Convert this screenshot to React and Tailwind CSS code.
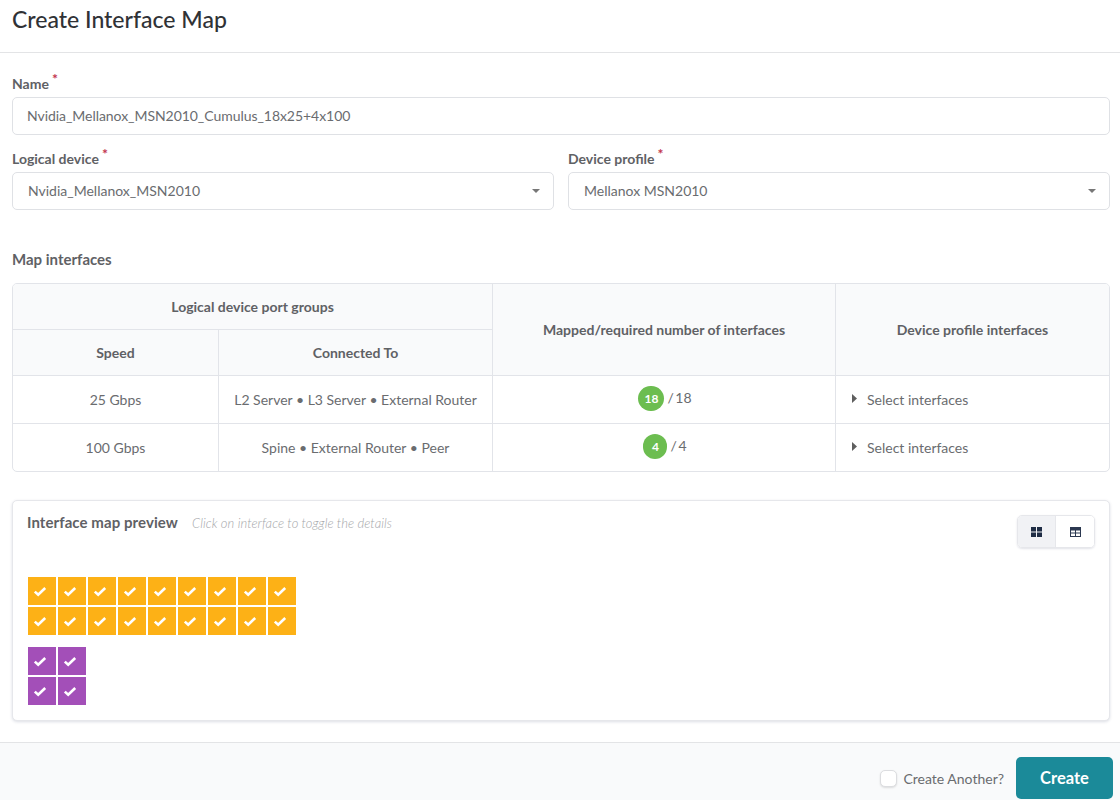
import React from "react";

const Star = () => <span className="relative top-[-4px] ml-[3px] text-[14px] leading-none text-[#c2334d]">*</span>;

const Caret = () => (
  <svg width="8" height="4" viewBox="0 0 8 4" className="shrink-0"><path d="M0 0h8L4 4z" fill="#777" /></svg>
);

const Tri = () => (
  <svg width="5" height="9" viewBox="0 0 5 9" className="shrink-0 relative top-[-1px]"><path d="M0 0l5 4.5L0 9z" fill="#5f5f5f" /></svg>
);

const Check = () => (
  <svg width="14" height="11" viewBox="0 0 14 11" fill="none"><path d="M1.8 5.6l3.4 3.2 7-6.8" stroke="#fff" strokeWidth="2.6" /></svg>
);

const Port = ({ color }) => (
  <div className={`w-7 h-7 pr-1 flex items-center justify-center ${color}`}><Check /></div>
);

const Select = ({ label, value }) => (
  <div className="flex-1 min-w-0">
    <div className="h-[22px] flex items-center text-[14px] font-bold text-[#5f6165]">{label}<Star /></div>
    <div className="mt-[3px] h-[38px] rounded-[5px] border border-[#dfe1e5] bg-white flex items-center justify-between pl-[15px] pr-[13px] pb-[1px] text-[14px] text-[#6a6c6f]">
      {value}<Caret />
    </div>
  </div>
);

const th = "bg-[#f9fafb] font-bold text-[14px] text-[#5f6165] text-center border-[#e2e4e9]";
const td = "text-[14px] text-[#6a6c6f] text-center border-[#e2e4e9]";

const Count = ({ n, w }) => (
  <div className="flex items-center justify-center gap-[3px] pl-[2px] relative top-[-1px]">
    <span className={`h-[25px] ${w} rounded-full bg-[#6cbd50] text-white text-[12px] font-bold flex items-center justify-center`}>{n}</span>
    <span className="relative top-[-1px] [word-spacing:-2px]">/ {n}</span>
  </div>
);

const Select2 = () => (
  <div className="flex items-center gap-[10px] pl-[16px]"><Tri /><span>Select interfaces</span></div>
);

export default function App() {
  return (
    <div className="h-[800px] w-[1120px] overflow-hidden flex flex-col bg-white font-['Lato','Noto_Sans',sans-serif]">
      <header className="h-[53px] shrink-0 border-b border-[#e3e4e6] pl-3 pb-[13px] flex items-center">
        <h1 className="text-[23px] font-medium leading-none text-[#303236]">Create Interface Map</h1>
      </header>

      <main className="flex-1 min-h-0 pl-3 pr-[10px] pt-[19px]">
        <div className="h-[22px] flex items-center text-[14px] font-bold text-[#5f6165]">Name<Star /></div>
        <div className="mt-[3px] h-[38px] rounded-[5px] border border-[#dfe1e5] bg-white flex items-center px-[14px] pb-[1px] text-[14px] tracking-[-0.05px] text-[#6a6c6f]">
          Nvidia_Mellanox_MSN2010_Cumulus_18x25+4x100
        </div>

        <div className="mt-[12px] flex gap-[14px]">
          <Select label="Logical device" value="Nvidia_Mellanox_MSN2010" />
          <Select label="Device profile" value="Mellanox MSN2010" />
        </div>

        <div className="mt-[38px] h-[22px] flex items-center text-[15px] font-bold text-[#5f6165]">Map interfaces</div>

        <table className="mt-[13px] w-full table-fixed border-separate border-spacing-0 rounded-[5px] border border-[#e2e4e9] overflow-hidden">
          <colgroup>
            <col className="w-[206px]" />
            <col className="w-[274px]" />
            <col className="w-[343px]" />
            <col />
          </colgroup>
          <thead>
            <tr className="h-[46px]">
              <th colSpan={2} className={`${th} border-b border-r`}>Logical device port groups</th>
              <th rowSpan={2} className={`${th} border-b border-r`}>Mapped/required number of interfaces</th>
              <th rowSpan={2} className={`${th} border-b`}>Device profile interfaces</th>
            </tr>
            <tr className="h-[46px]">
              <th className={`${th} border-b border-r`}>Speed</th>
              <th className={`${th} border-b border-r`}>Connected To</th>
            </tr>
          </thead>
          <tbody>
            <tr className="h-[48px]">
              <td className={`${td} border-b border-r`}>25 Gbps</td>
              <td className={`${td} border-b border-r`}>L2 Server • L3 Server • External Router</td>
              <td className={`${td} border-b border-r`}><Count n="18" w="w-[26px]" /></td>
              <td className={`${td} border-b !text-left`}><Select2 /></td>
            </tr>
            <tr className="h-[47px]">
              <td className={`${td} border-r`}>100 Gbps</td>
              <td className={`${td} border-r`}>Spine • External Router • Peer</td>
              <td className={`${td} border-r`}><Count n="4" w="w-[24px]" /></td>
              <td className={`${td} !text-left`}><Select2 /></td>
            </tr>
          </tbody>
        </table>

        <section className="mt-[28px] h-[221px] rounded-[5px] border border-[#e6e7eb] shadow-[0_1px_3px_rgba(60,70,110,0.18)] bg-white pl-[15px] pr-[14px] pt-[14px]">
          <div className="flex justify-between items-start">
            <div className="flex items-baseline leading-none -ml-px">
              <span className="text-[15px] font-bold tracking-[0.08px] text-[#5f6165]">Interface map preview</span>
              <span className="ml-[14px] text-[13px] italic font-light tracking-[0.05px] text-[#a4a6a9]">Click on interface to toggle the details</span>
            </div>
            <div className="flex h-[33px] w-[78px] rounded-[5px] border border-[#e6e7eb] shadow-[0_1px_2px_rgba(60,70,110,0.15)] overflow-hidden">
              <div className="w-[38px] bg-[#f1f2f5] flex items-center justify-center border-r border-[#e6e7eb]">
                <svg width="11" height="10" viewBox="0 0 11 10"><path d="M0 0h5v4.5H0zM6 0h5v4.5H6zM0 5.5h5V10H0zM6 5.5h5V10H6z" fill="#1f2d45" /></svg>
              </div>
              <div className="flex-1 bg-white flex items-center justify-center">
                <svg width="11" height="10" viewBox="0 0 11 10"><path fillRule="evenodd" d="M0 0h11v10H0zM1 3.5v2h4v-2zM6 3.5v2h4v-2zM1 6.5V9h4V6.5zM6 6.5V9h4V6.5z" fill="#2b3850" /></svg>
              </div>
            </div>
          </div>

          <div className="mt-[29px] grid grid-cols-[repeat(9,28px)] gap-[2px] w-fit">
            {Array.from({ length: 18 }, (_, i) => <Port key={i} color="bg-[#fdb116]" />)}
          </div>
          <div className="mt-[12px] grid grid-cols-[repeat(2,28px)] gap-[2px] w-fit">
            {Array.from({ length: 4 }, (_, i) => <Port key={i} color="bg-[#a34fb8]" />)}
          </div>
        </section>
      </main>

      <footer className="h-[58px] shrink-0 border-t border-[#e3e4e6] bg-[#f9fafb] flex items-start justify-end pr-[7px] pt-[14px]">
        <div className="flex items-center h-[42px] mr-[12px]">
          <span className="w-[17px] h-[17px] rounded-[5px] border border-[#dcdde0] bg-white shadow-[0_1px_2px_rgba(0,0,0,0.12)]" />
          <span className="ml-[6px] text-[14px] text-[#6a6c6f]">Create Another?</span>
        </div>
        <button className="h-[42px] w-[97px] rounded-[5px] bg-[#1b8a99] text-white text-[16.5px] font-bold">Create</button>
      </footer>
    </div>
  );
}
